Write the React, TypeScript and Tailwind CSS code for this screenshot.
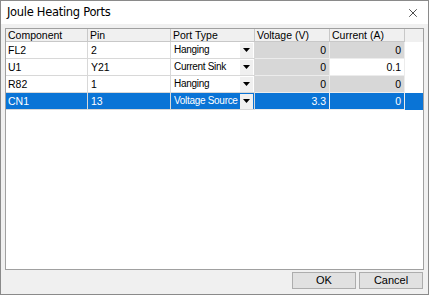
import { X } from 'lucide-react';

const rows = [
  { comp: 'FL2', pin: '2', type: 'Hanging', v: '0', a: '0', vEdit: false, aEdit: false },
  { comp: 'U1', pin: 'Y21', type: 'Current Sink', v: '0', a: '0.1', vEdit: false, aEdit: true },
  { comp: 'R82', pin: '1', type: 'Hanging', v: '0', a: '0', vEdit: false, aEdit: false },
  { comp: 'CN1', pin: '13', type: 'Voltage Source', v: '3.3', a: '0', vEdit: true, aEdit: false, sel: true },
];

const cols = 'grid grid-cols-[82px_83px_84px_75px_75px]';

const Arrow = () => (
  <svg width="7" height="4" viewBox="0 0 7 4">
    <path d="M0 0h7L3.5 4z" fill="#000" />
  </svg>
);

export default function App() {
  return (
    <div className="w-[429px] h-[295px] border border-[#8a8a8a] bg-[#f0f0f0] flex flex-col font-['Liberation_Sans',sans-serif] text-[10.5px] text-black leading-none whitespace-nowrap">
      <div className="h-[23px] bg-white flex items-center justify-between pl-[6px] pr-[8px] shrink-0">
        <span className="font-['DejaVu_Sans',sans-serif] tracking-[-0.3px] text-[11.5px]">Joule Heating Ports</span>
        <X size={14} strokeWidth={1.2} />
      </div>

      <div className="flex-1 flex flex-col px-[4px] pt-[4px] pb-[5px]">
        <div className="h-[242px] border border-[#a0a0a0] bg-white">
          <div className={`${cols} h-[13px] bg-[#f0f0f0]`}>
            {['Component', 'Pin', 'Port Type', 'Voltage (V)', 'Current (A)'].map((h) => (
              <div key={h} className="border-r border-b border-[#c8c8c8] flex items-center pl-[2px]">
                {h}
              </div>
            ))}
          </div>
          {rows.map((r) => (
            <div key={r.comp} className={`${cols} h-[17px] ${r.sel ? 'bg-[#0a74d6] text-white' : ''}`}>
              <div className="border-r border-b border-[#d8d8d8] flex items-center pl-[2px]">{r.comp}</div>
              <div className="border-r border-b border-[#d8d8d8] flex items-center pl-[3px]">{r.pin}</div>
              <div className="border-r border-b border-[#d8d8d8] flex items-center justify-between pl-[3px]">
                <span className="text-[10px] tracking-[-0.3px]">{r.type}</span>
                <span className="w-[13px] h-[15px] bg-[#f0f0f0] flex items-center justify-center mr-[1px] shrink-0">
                  <Arrow />
                </span>
              </div>
              <div className={`border-r border-b border-[#ececec] flex items-center justify-end pr-[3px] ${r.sel ? '' : r.vEdit ? 'bg-white' : 'bg-[#d7d7d7]'}`}>
                {r.v}
              </div>
              <div className={`border-r border-b border-[#ececec] flex items-center justify-end pr-[3px] ${r.sel ? '' : r.aEdit ? 'bg-white' : 'bg-[#d7d7d7]'}`}>
                {r.a}
              </div>
            </div>
          ))}
        </div>

        <div className="flex justify-end gap-[3px] mt-[2px] pr-[1px]">
          <button className="w-[64px] h-[17px] bg-[#e1e1e1] border border-[#adadad] text-[11px]">OK</button>
          <button className="w-[64px] h-[17px] bg-[#e1e1e1] border border-[#adadad] text-[11px]">Cancel</button>
        </div>
      </div>
    </div>
  );
}
